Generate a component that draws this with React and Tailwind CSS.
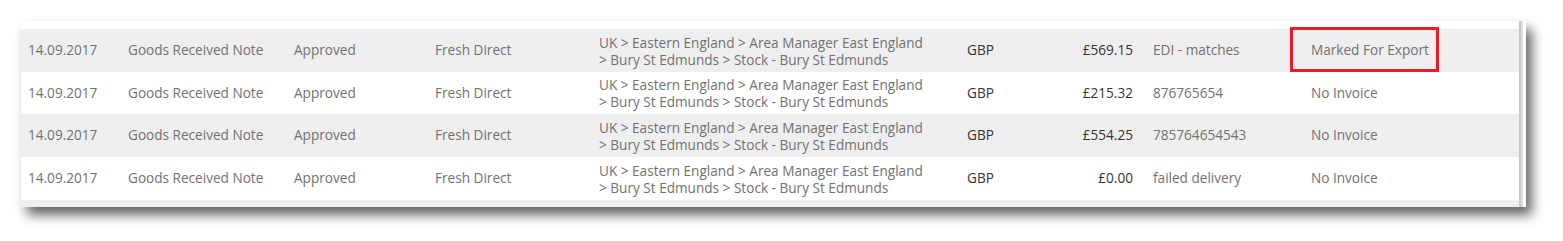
const rows = [
  {
    date: "14.09.2017",
    type: "Goods Received Note",
    status: "Approved",
    supplier: "Fresh Direct",
    currency: "GBP",
    amount: "£569.15",
    ref: "EDI - matches",
    invoice: "Marked For Export",
    highlight: true,
  },
  {
    date: "14.09.2017",
    type: "Goods Received Note",
    status: "Approved",
    supplier: "Fresh Direct",
    currency: "GBP",
    amount: "£215.32",
    ref: "876765654",
    invoice: "No Invoice",
  },
  {
    date: "14.09.2017",
    type: "Goods Received Note",
    status: "Approved",
    supplier: "Fresh Direct",
    currency: "GBP",
    amount: "£554.25",
    ref: "785764654543",
    invoice: "No Invoice",
  },
  {
    date: "14.09.2017",
    type: "Goods Received Note",
    status: "Approved",
    supplier: "Fresh Direct",
    currency: "GBP",
    amount: "£0.00",
    ref: "failed delivery",
    invoice: "No Invoice",
  },
];

const heights = ["h-[43px]", "h-[42px]", "h-[43px]", "h-[43px]"];

const Row = ({ row, index }) => (
  <div
    className={`grid grid-cols-[100px_166px_141px_164px_368px_100px_66px_178px_1fr] items-center pl-[7px] ${heights[index]} ${
      index % 2 === 0 ? "bg-[#efefef]" : "bg-white"
    }`}
  >
    <div>{row.date}</div>
    <div>{row.type}</div>
    <div>{row.status}</div>
    <div>{row.supplier}</div>
    <div className="leading-[17px]">
      <div>UK &gt; Eastern England &gt; Area Manager East England</div>
      <div>&gt; Bury St Edmunds &gt; Stock - Bury St Edmunds</div>
    </div>
    <div className="text-[#333]">{row.currency}</div>
    <div className="text-right text-[#333]">{row.amount}</div>
    <div className="pl-[20px]">{row.ref}</div>
    <div className="relative flex items-center self-stretch">
      {row.highlight && (
        <div className="absolute left-[-21px] top-[-2px] h-[45px] w-[149px] border-[3px] border-[#ed1c24]" />
      )}
      {row.invoice}
    </div>
  </div>
);

const App = () => {
  return (
    <div className="h-[241px] w-[1563px] bg-white pl-[21px] pt-[21px]">
      <div
        className="flex h-[186px] w-[1505px] bg-white text-[13.6px] text-[#727272] shadow-[6px_8px_11px_rgba(0,0,0,0.6)]"
        style={{ fontFamily: '"Open Sans", "Noto Sans", sans-serif' }}
      >
        <div className="flex w-[1498px] flex-col overflow-hidden">
          <div className="h-[8px] shrink-0 bg-white" />
          {rows.map((row, i) => (
            <Row key={i} row={row} index={i} />
          ))}
          <div className="grow bg-[#efefef]" />
        </div>
        <div className="w-[2px] bg-[#c6c6c6]" />
        <div className="w-[2px] bg-[#dedede]" />
        <div className="w-[3px] bg-white" />
      </div>
    </div>
  );
};

export default App;
